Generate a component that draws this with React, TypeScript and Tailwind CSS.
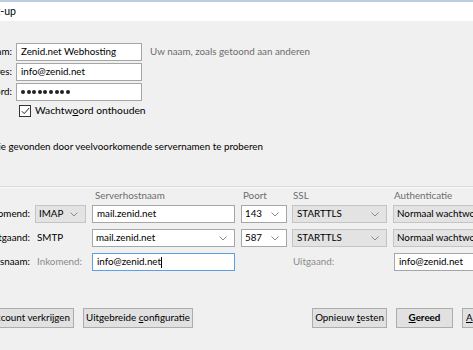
import React from "react";

const Chevron = () => (
  <svg width="8" height="5" viewBox="0 0 8 5" className="shrink-0">
    <polyline points="0.5,0.5 4,4 7.5,0.5" fill="none" stroke="#8a8a8a" strokeWidth="1" />
  </svg>
);

const Input = ({ className, children }: { className: string; children?: React.ReactNode }) => (
  <div className={`h-[18px] bg-white border flex items-center pl-[4px] whitespace-nowrap overflow-hidden shrink-0 ${className}`}>
    {children}
  </div>
);

const GraySelect = ({ className, text }: { className: string; text: string }) => (
  <div className={`h-[18px] bg-[#e3e3e3] border border-[#c4c4c4] flex items-center justify-between pl-[3px] pr-[7px] whitespace-nowrap overflow-hidden shrink-0 ${className}`}>
    <span>{text}</span>
    <Chevron />
  </div>
);

const Btn = ({ className, children }: { className: string; children: React.ReactNode }) => (
  <div className={`h-[20px] bg-[#e1e1e1] border border-[#adadad] flex items-center whitespace-nowrap shrink-0 ${className}`}>
    <span>{children}</span>
  </div>
);

export default function App() {
  return (
    <div
      className="w-[473px] h-[350px] overflow-hidden bg-[#f0f0f0] text-[9.8px] leading-none text-black flex flex-col"
      style={{ fontFamily: 'Lato, "Noto Sans", sans-serif' }}
    >
      <div className="h-[2px] bg-[#bccde0] shrink-0" />
      <div className="h-[19px] bg-white flex items-center shrink-0">
        <div className="w-[16px] flex justify-end overflow-hidden whitespace-nowrap">
          <span className="shrink-0 text-[10.5px]">E-mailaccount set-up</span>
        </div>
      </div>

      <div className="mt-[22px] flex flex-col gap-[2px] shrink-0">
        <div className="flex items-center h-[18px]">
          <div className="w-[12px] flex justify-end overflow-hidden whitespace-nowrap shrink-0">
            <span className="shrink-0">Uw naam:</span>
          </div>
          <Input className="ml-[4px] w-[126px] border-[#a6a6a6]">Zenid.net Webhosting</Input>
          <span className="ml-[8px] text-[#6d6d6d] whitespace-nowrap">Uw naam, zoals getoond aan anderen</span>
        </div>
        <div className="flex items-center h-[18px]">
          <div className="w-[12px] flex justify-end overflow-hidden whitespace-nowrap shrink-0">
            <span className="shrink-0">E-mailadres:</span>
          </div>
          <Input className="ml-[4px] w-[126px] border-[#a6a6a6]">info@zenid.net</Input>
        </div>
        <div className="flex items-center h-[18px]">
          <div className="w-[12px] flex justify-end overflow-hidden whitespace-nowrap shrink-0">
            <span className="shrink-0">Wachtwoord:</span>
          </div>
          <Input className="ml-[4px] w-[126px] border-[#a6a6a6] gap-[1.6px]">
            {Array.from({ length: 9 }).map((_, i) => (
              <div key={i} className="w-[4px] h-[4px] rounded-full bg-[#222]" />
            ))}
          </Input>
        </div>
      </div>

      <div className="mt-[3px] flex items-center h-[13px] shrink-0">
        <div className="ml-[19px] w-[12px] h-[12px] border border-[#333] bg-white flex items-center justify-center">
          <svg width="9" height="8" viewBox="0 0 9 8">
            <polyline points="0.8,4.2 3.2,6.6 8.2,1" fill="none" stroke="#222" strokeWidth="1" />
          </svg>
        </div>
        <span className="ml-[4px] whitespace-nowrap text-[10.3px]">
          Wachtw<span className="underline">o</span>ord onthouden
        </span>
      </div>

      <div className="mt-[23px] h-[14px] flex items-center shrink-0">
        <div className="w-[263px] flex justify-end overflow-hidden whitespace-nowrap">
          <span className="shrink-0">Configuratie gevonden door veelvoorkomende servernamen te proberen</span>
        </div>
      </div>

      <div className="mt-[32px] h-[1px] bg-[#d7d7d7] shrink-0" />
      <div className="h-[1px] bg-[#fafafa] shrink-0" />

      <div className="mt-[2px] h-[12px] flex items-center text-[#6d6d6d] whitespace-nowrap shrink-0">
        <span className="ml-[95px] w-[146px]">Serverhostnaam</span>
        <span className="ml-[2px] w-[50px]">Poort</span>
        <span className="ml-[0px] w-[101px]">SSL</span>
        <span>Authenticatie</span>
      </div>

      <div className="mt-[3px] flex flex-col gap-[6px] shrink-0">
        <div className="flex items-center h-[18px]">
          <div className="w-[30px] flex justify-end overflow-hidden whitespace-nowrap shrink-0">
            <span className="shrink-0">Inkomend:</span>
          </div>
          <GraySelect className="ml-[5px] w-[51px]" text="IMAP" />
          <Input className="ml-[6px] w-[143px] border-[#a6a6a6]">mail.zenid.net</Input>
          <div className="ml-[6px] w-[46px] h-[18px] bg-white border border-[#a6a6a6] flex items-center justify-between pl-[3px] pr-[7px] shrink-0">
            <span>143</span>
            <Chevron />
          </div>
          <GraySelect className="ml-[5px] w-[95px] pl-[4px]" text="STARTTLS" />
          <GraySelect className="ml-[6px] w-[100px]" text="Normaal wachtwoord" />
        </div>
        <div className="flex items-center h-[18px]">
          <div className="w-[30px] flex justify-end overflow-hidden whitespace-nowrap shrink-0">
            <span className="shrink-0">Uitgaand:</span>
          </div>
          <span className="ml-[7px] w-[49px] shrink-0">SMTP</span>
          <div className="ml-[6px] w-[143px] h-[18px] bg-white border border-[#a6a6a6] flex items-center justify-between pl-[3px] pr-[7px] shrink-0">
            <span>mail.zenid.net</span>
            <Chevron />
          </div>
          <div className="ml-[6px] w-[46px] h-[18px] bg-white border border-[#a6a6a6] flex items-center justify-between pl-[3px] pr-[7px] shrink-0">
            <span>587</span>
            <Chevron />
          </div>
          <GraySelect className="ml-[5px] w-[95px] pl-[4px]" text="STARTTLS" />
          <GraySelect className="ml-[6px] w-[100px]" text="Normaal wachtwoord" />
        </div>
        <div className="flex items-center h-[18px]">
          <div className="w-[30px] flex justify-end overflow-hidden whitespace-nowrap shrink-0">
            <span className="shrink-0">Gebruikersnaam:</span>
          </div>
          <span className="ml-[7px] w-[49px] shrink-0 text-[#8c8c8c]">Inkomend:</span>
          <Input className="ml-[6px] w-[143px] border-[#5aa0e6]">
            info@zenid.net<span className="inline-block w-[1px] h-[11px] bg-black" />
          </Input>
          <span className="ml-[58px] w-[95px] shrink-0 text-[#8c8c8c]">Uitgaand:</span>
          <Input className="ml-[6px] w-[100px] border-[#a6a6a6]">info@zenid.net</Input>
        </div>
      </div>

      <div className="mt-[37px] flex items-center shrink-0">
        <div className="w-[74px] flex justify-end overflow-hidden shrink-0">
          <Btn className="px-[3px] justify-center">Nieuw account verkrijgen</Btn>
        </div>
        <Btn className="ml-[9px] w-[110px] justify-center">
          Uitgebreide <span className="underline">c</span>onfiguratie
        </Btn>
        <Btn className="ml-[119px] w-[75px] justify-center">
          Opnieuw <span className="underline">t</span>esten
        </Btn>
        <Btn className="ml-[9px] w-[57px] justify-center font-bold">
          <span className="underline">G</span>ereed
        </Btn>
        <Btn className="ml-[9px] w-[70px] pl-[3px]">
          <span className="underline">A</span>nnuleren
        </Btn>
      </div>
    </div>
  );
}
